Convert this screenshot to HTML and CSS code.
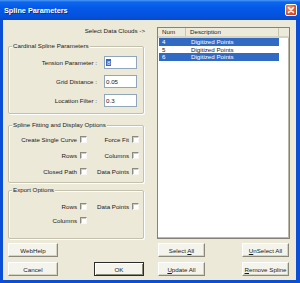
FILE: index.html
```html
<!DOCTYPE html>
<html lang="en">
<head>
    <meta charset="UTF-8">
    <meta name="viewport" content="width=device-width, initial-scale=1.0">
    <title>Spline Parameters</title>
    <link rel="stylesheet" href="styles.css">
</head>
<body>
    <div class="window">
        <div class="titlebar">
            <span class="title">Spline Parameters</span>
            <div class="close">
                <svg width="12" height="12" viewBox="0 0 12 12">
                    <path d="M3.5 3.5 L8.5 8.5 M8.5 3.5 L3.5 8.5" stroke="#fff" stroke-width="1.6" stroke-linecap="round"/>
                </svg>
            </div>
        </div>
        <div class="client">
            <div class="left">
                <div class="hint">Select Data Clouds -&gt;</div>

                <div class="group cardinal">
                    <div class="group-title">Cardinal Spline Parameters</div>
                    <div class="fields">
                        <div class="field-row"><span>Tension Parameter :</span><div class="field"><span class="sel">8</span></div></div>
                        <div class="field-row"><span>Grid Distance :</span><div class="field">0.05</div></div>
                        <div class="field-row"><span>Location Filter :</span><div class="field">0.3</div></div>
                    </div>
                </div>

                <div class="group fit">
                    <div class="group-title">Spline Fitting and Display Options</div>
                    <div class="checks">
                        <div class="check"><span>Create Single Curve</span><i class="box"></i></div>
                        <div class="check"><span>Force Fit</span><i class="box"></i></div>
                        <div class="check"><span>Rows</span><i class="box"></i></div>
                        <div class="check"><span>Columns</span><i class="box"></i></div>
                        <div class="check"><span>Closed Path</span><i class="box"></i></div>
                        <div class="check"><span>Data Points</span><i class="box"></i></div>
                    </div>
                </div>

                <div class="group export">
                    <div class="group-title">Export Options</div>
                    <div class="checks">
                        <div class="check"><span>Rows</span><i class="box"></i></div>
                        <div class="check"><span>Data Points</span><i class="box"></i></div>
                        <div class="check"><span>Columns</span><i class="box"></i></div>
                    </div>
                </div>

                <div class="left-buttons">
                    <button class="btn webhelp">WebHelp</button>
                    <button class="btn cancel">Cancel</button>
                    <button class="btn ok">OK</button>
                </div>
            </div>

            <div class="right">
                <div class="list">
                    <div class="list-head">
                        <div class="col-num">Num</div>
                        <div class="col-desc">Description</div>
                        <div class="col-fill"></div>
                    </div>
                    <div class="row selected"><span class="cell-num">4</span><span class="cell-desc">Digitized Points</span></div>
                    <div class="row"><span class="cell-num">5</span><span class="cell-desc">Digitized Points</span></div>
                    <div class="row selected"><span class="cell-num">6</span><span class="cell-desc">Digitized Points</span></div>
                </div>

                <div class="right-buttons">
                    <button class="btn">Select <u>A</u>ll</button>
                    <button class="btn"><u>U</u>nSelect All</button>
                    <button class="btn"><u>U</u>pdate All</button>
                    <button class="btn"><u>R</u>emove Spline</button>
                </div>
            </div>
        </div>
    </div>
</body>
</html>
```

FILE: styles.css
```css
* {
    box-sizing: border-box;
}

body {
    margin: 0;
    font-family: "Liberation Sans", Arial, sans-serif;
    font-size: 6.2px;
    color: #1a1a1a;
    background: #fff;
}

.window {
    width: 300px;
    height: 283px;
    display: flex;
    flex-direction: column;
    background: #0a4fd6;
}

.titlebar {
    height: 20px;
    display: flex;
    align-items: center;
    justify-content: space-between;
    padding: 0 3px 0 4px;
    background: linear-gradient(#4f9bf8 0, #0d66ec 2px, #0359e8 40%, #0352de 80%, #0a48c6 100%);
    color: #fff;
}

.title {
    font-weight: bold;
    font-size: 7.3px;
    text-shadow: 1px 1px #0a2e8c;
}

.close {
    width: 12px;
    height: 12px;
    border: 1px solid #fff;
    border-radius: 2px;
    background: radial-gradient(circle at 35% 30%, #f09a7a, #d8532e 60%, #bf3a16);
    display: flex;
}

.close svg {
    margin: -1px;
}

.client {
    flex: 1;
    margin: 0 4px 3px 3px;
    background: #ece9d8;
    display: flex;
    gap: 12px;
    padding: 7px 6px 0 5px;
}

.left {
    width: 137px;
    display: flex;
    flex-direction: column;
}

.hint {
    text-align: right;
    line-height: 8px;
}

.group {
    border: 1px solid #c3c0ae;
    border-radius: 2px;
    margin-right: 1px;
    box-shadow: 1px 1px 0 #fff, inset 1px 1px 0 #fff;
}

.group-title {
    margin: -5px 0 0 3px;
    padding: 0 1px;
    width: fit-content;
    line-height: 8px;
    background: #ece9d8;
}

.cardinal {
    margin-top: 11px;
    padding: 0 6px 6px 0;
}

.fields {
    margin-top: 6px;
    display: flex;
    flex-direction: column;
    gap: 6px;
}

.field-row {
    height: 13px;
    display: flex;
    justify-content: flex-end;
    align-items: center;
    gap: 7px;
}

.field {
    width: 33px;
    height: 13px;
    border: 1px solid #8fa6bd;
    background: #fff;
    padding-left: 1px;
    line-height: 11px;
}

.sel {
    background: #316ac5;
    color: #fff;
    padding: 0 1px;
}

.fit {
    margin-top: 11px;
    padding-bottom: 3px;
}

.fit .checks {
    margin-top: 2px;
    grid-auto-rows: 16px;
}

.export {
    margin-top: 7px;
    padding-bottom: 11px;
}

.export .checks {
    margin-top: 5px;
    grid-auto-rows: 14px;
}

.checks {
    display: grid;
    grid-template-columns: 78px 52px;
}

.check {
    display: flex;
    justify-content: flex-end;
    align-items: center;
    gap: 3px;
}

.box {
    width: 7px;
    height: 7px;
    border: 1px solid;
    border-color: #8b8a80 #f7f6f0 #f7f6f0 #8b8a80;
    background: #fff;
    box-shadow: inset 1px 1px #cfccbd;
}

.btn {
    height: 14px;
    padding: 0;
    font: inherit;
    color: #1a1a1a;
    background: #f5f4ec;
    border: 1px solid;
    border-color: #fff #8a8878 #8a8878 #fff;
    box-shadow: inset -1px -1px #d6d3c4;
}

.left-buttons {
    margin-top: 4px;
    display: grid;
    grid-template-columns: 50px 1fr;
    grid-template-rows: 14px 14px;
    row-gap: 5px;
}

.webhelp {
    grid-column: 1;
    grid-row: 1;
}

.cancel {
    grid-column: 1;
    grid-row: 2;
}

.ok {
    grid-column: 2;
    grid-row: 2;
    width: 50px;
    justify-self: end;
    margin-right: 1px;
    border-color: #2b2b2b;
    box-shadow: inset 1px 1px #fff, inset -1px -1px #8a8878;
}

.right {
    width: 133px;
    display: flex;
    flex-direction: column;
}

.list {
    height: 212px;
    background: #fff;
    border: 1px solid #858377;
    box-shadow: inset -1px -1px #bab7a8;
    overflow: hidden;
}

.list-head {
    height: 10px;
    display: flex;
    line-height: 8px;
    background: #ebeadb;
    border-bottom: 2px solid #d6d2c2;
}

.col-num {
    width: 28px;
    padding-left: 4px;
    border-right: 1px solid #c7c5b2;
}

.col-desc {
    width: 93px;
    padding-left: 4px;
    border-right: 1px solid #c7c5b2;
}

.col-fill {
    flex: 1;
}

.row {
    width: 120px;
    height: 7.5px;
    margin-left: 1px;
    display: flex;
    line-height: 7.5px;
}

.row.selected {
    background: #316ac5;
    color: #fff;
}

.cell-num {
    width: 27px;
    padding-left: 3px;
}

.cell-desc {
    padding-left: 5px;
}

.right-buttons {
    margin-top: 4px;
    display: grid;
    grid-template-columns: 47px 47px;
    grid-template-rows: 14px 14px;
    justify-content: space-between;
    row-gap: 5px;
    padding: 0 1px;
}
```
